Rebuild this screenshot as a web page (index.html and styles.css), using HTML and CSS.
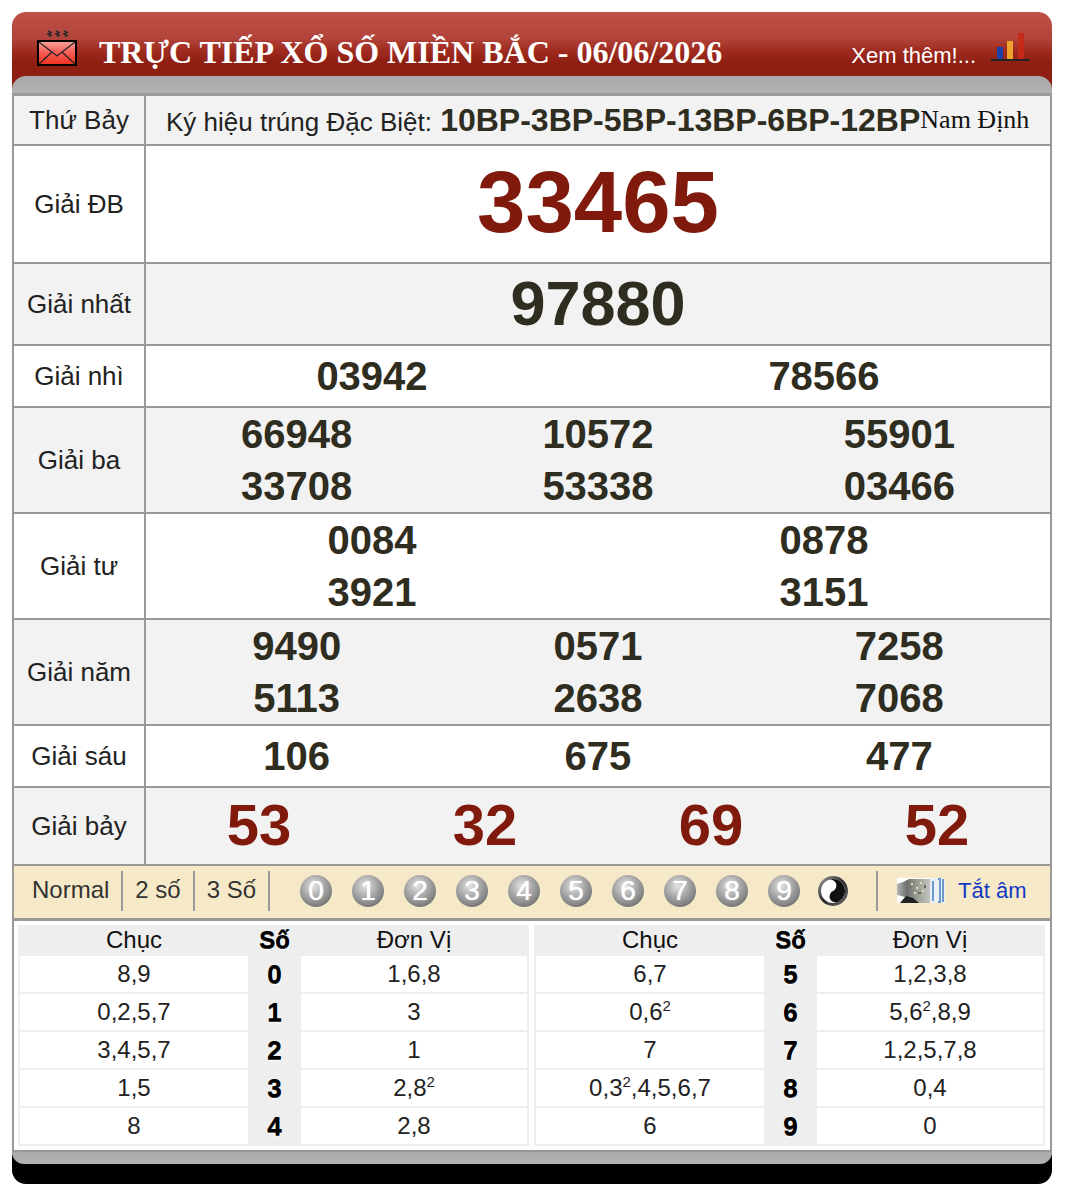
FILE: index.html
```html
<!DOCTYPE html>
<html lang="vi">
<head>
<meta charset="utf-8">
<title>Trực tiếp xổ số miền Bắc</title>
<link rel="stylesheet" href="styles.css">
</head>
<body>
<div class="box">
  <div class="head">
    <div class="head-main">
      <svg class="mail" width="40" height="36" viewBox="0 0 40 36">
        <g fill="none" stroke="#2a2a2a" stroke-width="1.6"><path d="M11 1l3 1.5-3 1.5 3 1.5-2 1"/><path d="M19 1l3 1.5-3 1.5 3 1.5-2 1"/><path d="M27 1l3 1.5-3 1.5 3 1.5-2 1"/></g>
        <defs><linearGradient id="env" x1="0" y1="0" x2="0" y2="1"><stop offset="0" stop-color="#f7a79b"/><stop offset=".45" stop-color="#f4605a"/><stop offset="1" stop-color="#f0301c"/></linearGradient></defs>
        <rect x="1" y="11" width="38" height="24" fill="url(#env)" stroke="#000" stroke-width="2"/>
        <path d="M2 12l18 14 18-14M2 34l13-12M38 34l-13-12" fill="none" stroke="#222" stroke-width="1.2"/>
      </svg>
      <h1 class="title">TRỰC TIẾP XỔ SỐ MIỀN BẮC - 06/06/2026</h1>
      <span class="more">Xem thêm!...</span>
      <svg class="chart" width="39" height="30" viewBox="0 0 39 30">
        <rect x="6" y="15" width="6" height="12" fill="#1c3fa8"/><rect x="16" y="9" width="6" height="18" fill="#eda32c"/><rect x="27" y="1" width="6" height="26" fill="#c42a18"/>
        <rect x="0" y="27" width="39" height="2" fill="#222"/>
      </svg>
    </div>
    <div class="head-band"></div>
  </div>

  <div class="board">
    <div class="row shade r-top">
      <div class="label">Thứ Bảy</div>
      <div class="val top-line"><span class="sign">Ký hiệu trúng Đặc Biệt: <b>10BP-3BP-5BP-13BP-6BP-12BP</b></span><span class="prov">Nam Định</span></div>
    </div>
    <div class="row r-db">
      <div class="label">Giải ĐB</div>
      <div class="val n1 n-db"><span class="num-db">33465</span></div>
    </div>
    <div class="row shade r-nhat">
      <div class="label">Giải nhất</div>
      <div class="val n1 n-nhat"><span class="num-1">97880</span></div>
    </div>
    <div class="row r-s">
      <div class="label">Giải nhì</div>
      <div class="val n2 num"><span>03942</span><span>78566</span></div>
    </div>
    <div class="row shade r-d">
      <div class="label">Giải ba</div>
      <div class="val n3 num"><span>66948</span><span>10572</span><span>55901</span><span>33708</span><span>53338</span><span>03466</span></div>
    </div>
    <div class="row r-d">
      <div class="label">Giải tư</div>
      <div class="val n2 num"><span>0084</span><span>0878</span><span>3921</span><span>3151</span></div>
    </div>
    <div class="row shade r-d">
      <div class="label">Giải năm</div>
      <div class="val n3 num"><span>9490</span><span>0571</span><span>7258</span><span>5113</span><span>2638</span><span>7068</span></div>
    </div>
    <div class="row r-s">
      <div class="label">Giải sáu</div>
      <div class="val n3 num"><span>106</span><span>675</span><span>477</span></div>
    </div>
    <div class="row shade r-bay">
      <div class="label">Giải bảy</div>
      <div class="val n4 num-7"><span>53</span><span>32</span><span>69</span><span>52</span></div>
    </div>

    <div class="tools">
      <span class="mode">Normal</span><span class="mode">2 số</span><span class="mode">3 Số</span>
      <div class="balls">
        <span class="ball">0</span><span class="ball">1</span><span class="ball">2</span><span class="ball">3</span><span class="ball">4</span><span class="ball">5</span><span class="ball">6</span><span class="ball">7</span><span class="ball">8</span><span class="ball">9</span>
        <svg class="yy" width="32" height="32" viewBox="0 0 32 32">
          <defs><linearGradient id="ring" x1="0" y1="0" x2="1" y2="1"><stop offset="0" stop-color="#9a9a9a"/><stop offset=".5" stop-color="#2a2a2a"/><stop offset="1" stop-color="#666"/></linearGradient></defs>
          <circle cx="16" cy="16" r="13.5" fill="#fff" stroke="url(#ring)" stroke-width="3"/>
          <g transform="rotate(-25 16 16)">
            <path d="M16 4a12 12 0 0 1 0 24a6 6 0 0 1 0-12a6 6 0 0 0 0-12z" fill="#111"/>
            <circle cx="16" cy="10" r="1.9" fill="#fff"/><circle cx="16" cy="22" r="1.9" fill="#111"/>
          </g>
        </svg>
      </div>
      <div class="mute">
        <svg width="48" height="26" viewBox="0 0 48 26">
          <defs><linearGradient id="spk" x1="0" y1="0" x2="1" y2="0"><stop offset="0" stop-color="#b5b5b5"/><stop offset=".3" stop-color="#6e6e6e"/><stop offset=".65" stop-color="#a0a294"/><stop offset="1" stop-color="#c4c4c4"/></linearGradient></defs>
          <rect x="0" y="0" width="33" height="25" fill="#fff"/>
          <path d="M0 6l6-2 6-3h21v24H14L8 19 0 17z" fill="url(#spk)"/>
          <path d="M3 25l6-7 7 2 6 5z" fill="#222"/>
          <g fill="#d9ddc8"><rect x="14" y="5" width="2" height="2"/><rect x="19" y="9" width="2" height="2"/><rect x="23" y="4" width="2" height="2"/><rect x="17" y="14" width="2" height="2"/><rect x="25" y="12" width="2" height="2"/></g>
          <g fill="#6a6a5e"><rect x="12" y="9" width="2" height="2"/><rect x="21" y="14" width="3" height="2"/><rect x="27" y="7" width="2" height="3"/></g>
          <rect x="33" y="0" width="15" height="25" fill="#eaf0f8"/>
          <path d="M36 3v20M41 1h2v23h-2M46 1v23" stroke="#6f9ad0" stroke-width="2" fill="none"/>
        </svg>
        <span class="mute-text">Tắt âm</span>
      </div>
    </div>

    <div class="loto">
      <div class="lt">
        <div class="c hd">Chục</div><div class="c so hd">Số</div><div class="c hd">Đơn Vị</div>
        <div class="c">8,9</div><div class="c so">0</div><div class="c">1,6,8</div>
        <div class="c">0,2,5,7</div><div class="c so">1</div><div class="c">3</div>
        <div class="c">3,4,5,7</div><div class="c so">2</div><div class="c">1</div>
        <div class="c">1,5</div><div class="c so">3</div><div class="c">2,8<sup>2</sup></div>
        <div class="c">8</div><div class="c so">4</div><div class="c">2,8</div>
      </div>
      <div class="lt">
        <div class="c hd">Chục</div><div class="c so hd">Số</div><div class="c hd">Đơn Vị</div>
        <div class="c">6,7</div><div class="c so">5</div><div class="c">1,2,3,8</div>
        <div class="c">0,6<sup>2</sup></div><div class="c so">6</div><div class="c">5,6<sup>2</sup>,8,9</div>
        <div class="c">7</div><div class="c so">7</div><div class="c">1,2,5,7,8</div>
        <div class="c">0,3<sup>2</sup>,4,5,6,7</div><div class="c so">8</div><div class="c">0,4</div>
        <div class="c">6</div><div class="c so">9</div><div class="c">0</div>
      </div>
    </div>
  </div>

  <div class="foot"><div class="foot-band"></div></div>
</div>
</body>
</html>
```
FILE: styles.css
```css
* { box-sizing: border-box; }
html, body { margin: 0; padding: 0; background: #fff; }
body { padding: 12px; font-family: "Liberation Sans", Arial, sans-serif; color: #111; }
.box { width: 1040px; }

.head { height: 81px; border-radius: 14px 14px 0 0; background: linear-gradient(#bf5148 0, #b2443b 26px, #a02c20 38px, #8f1f13 50px, #8f1f13 100%); overflow: hidden; }
.head-main { height: 64px; display: flex; align-items: center; padding: 0 22px 0 25px; }
.mail { flex: none; margin-top: 8px; }
.title { margin: 16px 0 0 22px; font: bold 32px "Liberation Serif", "Times New Roman", serif; color: #fff; white-space: nowrap; flex: 1; }
.more { font-size: 22px; color: #fff; margin: 24px 15px 0 0; }
.chart { flex: none; margin-top: 6px; }
.head-band { height: 17px; background: linear-gradient(#a8a8a8, #b2b2b2); border-radius: 14px 14px 0 0; }

.board { border: 2px solid #999; border-top-width: 3px; }
.row { display: flex; border-bottom: 2px solid #999; background: #fff; }
.shade { background: #f2f2f2; }
.r-top { height: 50px; }
.r-db { height: 118px; }
.r-nhat { height: 82px; }
.r-s { height: 62px; }
.r-d { height: 106px; }
.r-bay { height: 78px; }
.label { flex: none; width: 132px; border-right: 2px solid #999; display: flex; align-items: center; justify-content: center; font-size: 26px; color: #222; }
.val { flex: 1; min-width: 0; }
.top-line { display: flex; align-items: center; padding-left: 20px; color: #222; white-space: nowrap; }
.sign { font-size: 26px; }
.sign b { font-size: 32px; color: #2f2c20; margin-left: 1px; }
.prov { font: 26px "Liberation Serif", "Times New Roman", serif; color: #111; }
.n1 { display: flex; align-items: center; justify-content: center; }
.n-db { padding-bottom: 4px; }
.n-nhat { padding-bottom: 2px; }
.num-db { font-size: 87px; font-weight: bold; color: #7f1a0c; }
.num-1 { font-size: 63px; font-weight: bold; color: #2f2c20; }
.n2, .n3, .n4 { display: grid; align-content: center; justify-items: center; }
.n2 { grid-template-columns: repeat(2, 1fr); }
.n3 { grid-template-columns: repeat(3, 1fr); }
.n4 { grid-template-columns: repeat(4, 1fr); }
.num { font-size: 40px; line-height: 52px; font-weight: bold; color: #2f2c20; }
.num-7 { font-size: 58px; font-weight: bold; color: #7f1a0c; padding-bottom: 4px; }

.tools { height: 55px; display: flex; align-items: center; background: #f5e9c8; border-bottom: 3px solid #999; padding: 0 0 2px 6px; }
.mode { font-size: 24px; color: #333; padding: 0 12px; height: 40px; line-height: 38px; border-right: 2px solid #999; }
.balls { display: flex; align-items: center; gap: 20px; padding: 0 27px 0 30px; height: 40px; border-right: 2px solid #999; }
.ball { width: 32px; height: 32px; border-radius: 50%; background: radial-gradient(circle at 42% 34%, #e4e4e4 0, #b4b4b4 32%, #7a7a7a 74%, #565656 100%); color: #fff; font-size: 28px; line-height: 32px; text-align: center; text-shadow: 0 0 1px #fff; }
.yy { margin-left: -3px; }
.mute { display: flex; align-items: center; gap: 13px; margin-left: 19px; }
.mute-text { font-size: 22px; color: #1239c4; }

.loto { display: flex; gap: 5px; padding: 4px 0 4px 4px; background: #fff; }
.lt { width: 511px; display: grid; grid-template-columns: 228px 49px 226px; grid-template-rows: 29px repeat(5, 36px); gap: 2px; padding: 0 2px 2px 2px; background: #eee; }
.c { background: #fff; font-size: 24px; text-align: center; line-height: 36px; color: #222; }
.c sup { font-size: 15px; line-height: 0; }
.hd { background: #eee; color: #111; line-height: 30px; }
.so { background: #eee; font-size: 26px; font-weight: bold; color: #000; text-shadow: 0 1px 0 #333, 0 2px 2px #fff; }
.so.hd { font-size: 24px; }

.foot { height: 32px; background: #000; border-radius: 0 0 14px 14px; overflow: hidden; }
.foot-band { height: 12px; background: linear-gradient(#a8a8a8, #b4b4b4); border-radius: 0 0 14px 14px; }
```
